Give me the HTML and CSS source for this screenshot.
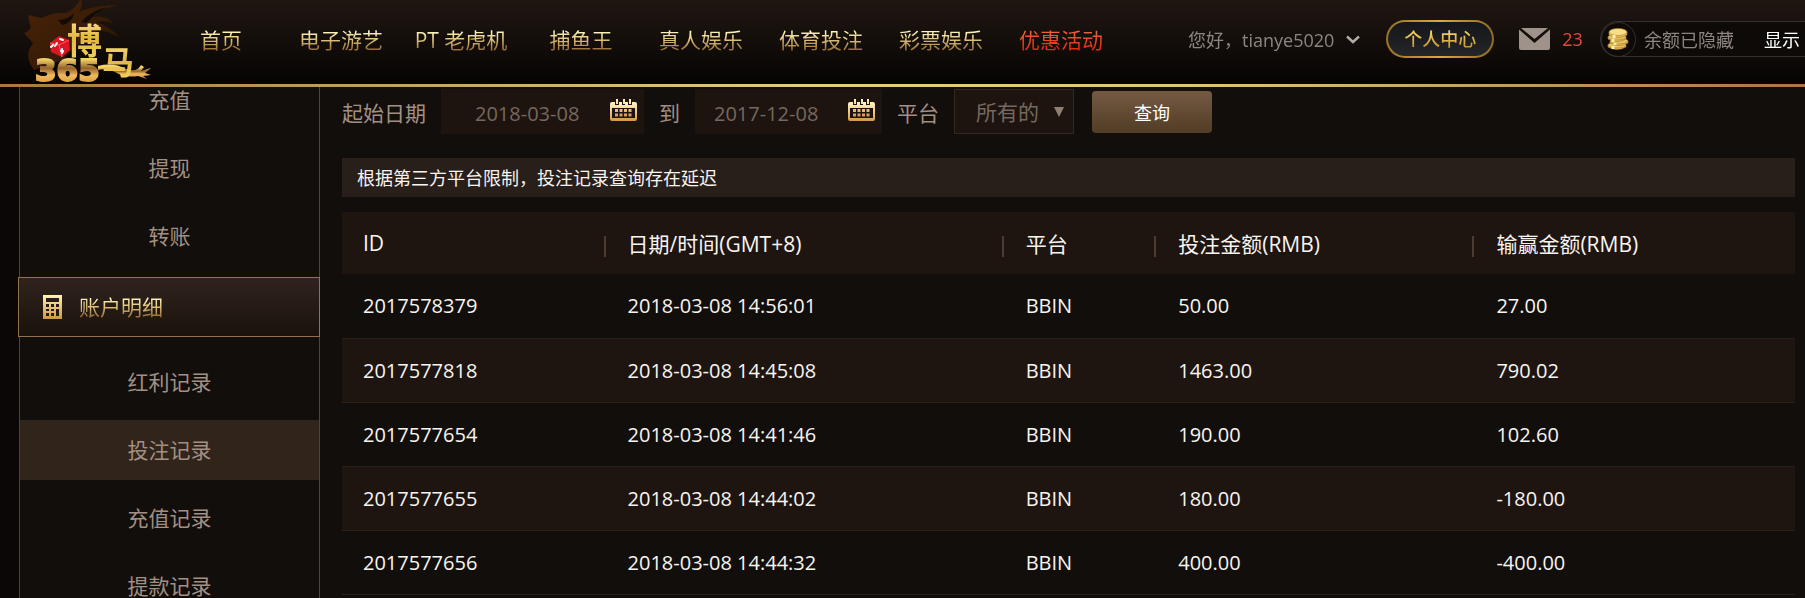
FILE: index.html
```html
<!DOCTYPE html>
<html lang="zh-CN">
<head>
<meta charset="utf-8">
<title>投注记录</title>
<link rel="stylesheet" href="styles.css">
</head>
<body>
<header class="topbar">
  <a class="logo" href="#" aria-label="博马365">
    <svg width="161" height="84" viewBox="0 0 161 84">
      <defs>
        <linearGradient id="gold" x1="0" y1="0" x2="0" y2="1">
          <stop offset="0" stop-color="#fff09a"/><stop offset=".5" stop-color="#e2b742"/><stop offset="1" stop-color="#f3d765"/>
        </linearGradient>
        <linearGradient id="bronze" x1="0" y1="0" x2="0" y2="1">
          <stop offset=".2" stop-color="#f3d36c"/><stop offset=".45" stop-color="#94632a"/><stop offset=".65" stop-color="#f0b95a"/><stop offset="1" stop-color="#c98a3c"/>
        </linearGradient>
        <linearGradient id="mane" x1="0" y1="0" x2="1" y2="1">
          <stop offset="0" stop-color="#4a2407"/><stop offset="1" stop-color="#2a1406"/>
        </linearGradient>
      </defs>
      <path fill="url(#mane)" d="M28 15 L42 18 Q54 12 66 13 Q76 8 79 1 L82 0 Q82 8 79 12 Q94 5 119 5 Q102 8 93 17 Q106 15 113 23 Q103 20 96 22 Q108 25 119 37 Q108 31 98 30 L76 46 L62 60 L34 70 Q26 60 29 50 L33 43 L24 33 Q33 30 30 24 Z"/>
      <path fill="#120b07" d="M81 22 Q92 10 108 7 Q94 13 87 23 Z M58 20 Q68 20 74 13 Q72 23 62 25 Z"/>
      <path fill="url(#bronze)" d="M98 66 Q113 62 126 69 Q137 73 141 65 L144 67 L141 71 L151 68 L145 73 L151 75 L143 76 L147 79 L138 76 Q125 78 115 72 Q107 68 98 70 Z"/>
      <text class="logo-main" x="67" y="54" fill="url(#gold)">博</text>
      <text class="logo-horse" x="102" y="74" fill="url(#gold)">马</text>
      <text class="logo-num" x="35" y="81" fill="url(#bronze)" stroke="url(#bronze)">365</text>
      <path fill="#dc1525" d="M50 43 L59 36 L69 40 L70 50 L62 57 L51 52 Z"/>
      <path stroke="#ff5a5a" stroke-width="1" fill="none" d="M50 43 L59 45 L69 40 M59 45 L62 57"/>
      <path stroke="#fff" stroke-width="2" stroke-linecap="round" d="M51 47 l2 -2 M55 46 l2 -3 M62 49 l-1 2 M62 53 l1 -2 M60 39 l3 1"/>
    </svg>
  </a>
  <nav class="mainnav">
    <a href="#"><span>首页</span></a>
    <a href="#"><span>电子游艺</span></a>
    <a href="#"><span>PT 老虎机</span></a>
    <a href="#"><span>捕鱼王</span></a>
    <a href="#"><span>真人娱乐</span></a>
    <a href="#"><span>体育投注</span></a>
    <a href="#"><span>彩票娱乐</span></a>
    <a href="#" class="promo"><span>优惠活动</span></a>
  </nav>
  <div class="account">
    <button class="user" type="button">您好，tianye5020
      <svg width="14" height="9" viewBox="0 0 14 9"><path d="M1 1.5 L7 7 L13 1.5" fill="none" stroke="#b5aca6" stroke-width="2.4"/></svg>
    </button>
    <a class="center-link" href="#"><span>个人中心</span></a>
    <a class="mail" href="#" aria-label="消息">
      <svg width="31" height="22" viewBox="0 0 31 22"><path fill="#9f928b" d="M2 0 H29 L15.500 11 Z M0 1.500 L15.500 15 L31 1.500 V20 Q31 22 29 22 H2 Q0 22 0 20 Z"/></svg>
      <span>23</span>
    </a>
    <div class="balance">
      <span class="coin">
        <svg width="24" height="24" viewBox="0 0 24 24">
          <g fill="#e9c25c" stroke="#a8782c" stroke-width=".6">
            <path d="M2 18 v2 q9 5 18 0 v-2z"/><ellipse cx="11" cy="18" rx="9" ry="3"/>
            <path d="M4 14 v2 q9 5 18 0 v-2z"/><ellipse cx="13" cy="14" rx="9" ry="3"/>
            <path d="M2 10 v2 q9 5 18 0 v-2z"/><ellipse cx="11" cy="10" rx="9" ry="3"/>
            <path d="M3 5 v3 q9 5 18 0 v-3z"/><ellipse cx="12" cy="5" rx="9" ry="3.500" fill="#f8df86"/>
          </g>
          <path stroke="#fff0ae" stroke-width="3" d="M8 8v3M7 12v3M9 16v2M7 19v3"/>
        </svg>
      </span>
      <span class="hidden-note">余额已隐藏</span>
      <button type="button" class="show">显示</button>
    </div>
  </div>
</header>

<div class="page">
  <aside class="sidebar">
    <a href="#">充值</a>
    <a href="#">提现</a>
    <a href="#">转账</a>
    <h2 class="group">
      <svg width="19" height="24" viewBox="0 0 19 24">
        <defs><linearGradient id="calc" x1="0" y1="0" x2="0" y2="1"><stop offset="0" stop-color="#fff3b8"/><stop offset="1" stop-color="#cf963f"/></linearGradient></defs>
        <path fill="url(#calc)" fill-rule="evenodd" d="M0 0H19V24H0Z M3 3V7H16V3Z M3 9V12H6V9Z M8 9V12H11V9Z M13 9V12H16V9Z M3 14V16H6V14Z M8 14V16H11V14Z M13 14V21H16V14Z M3 18V21H6V18Z M8 18V21H11V18Z"/>
      </svg>
      <span>账户明细</span>
    </h2>
    <a href="#">红利记录</a>
    <a href="#" class="active">投注记录</a>
    <a href="#">充值记录</a>
    <a href="#">提款记录</a>
  </aside>

  <main class="content">
    <form class="filters">
      <label for="from">起始日期</label>
      <div class="date date-from">
        <input id="from" type="text" value="2018-03-08">
        <button type="button" aria-label="选择起始日期">
          <svg width="27" height="23" viewBox="0 0 27 23">
            <defs><linearGradient id="cal" x1="0" y1="0" x2="0" y2="1"><stop offset="0" stop-color="#fff6c4"/><stop offset=".5" stop-color="#f0cd7c"/><stop offset="1" stop-color="#d8944a"/></linearGradient></defs>
            <path fill="url(#cal)" fill-rule="evenodd" d="M2 3H5V6H9V3H12V6H15V3H18V6H22V3H25Q27 3 27 5V20Q27 22 25 22H2Q0 22 0 20V5Q0 3 2 3Z M2 9V19H25V9Z"/>
            <path fill="url(#cal)" d="M6 0h2v5h-2zM13 0h2v5h-2zM19 0h2v5h-2zM5 10h3v3h-3zM9.500 10h3v3h-3zM14 10h3v3h-3zM18.500 10h3v3h-3zM5 14.500h3v3h-3zM9.500 14.500h3v3h-3zM14 14.500h3v3h-3zM18.500 14.500h3v3h-3z"/>
          </svg>
        </button>
      </div>
      <label for="to">到</label>
      <div class="date date-to">
        <input id="to" type="text" value="2017-12-08">
        <button type="button" aria-label="选择结束日期">
          <svg width="27" height="23" viewBox="0 0 27 23">
            <path fill="url(#cal)" fill-rule="evenodd" d="M2 3H5V6H9V3H12V6H15V3H18V6H22V3H25Q27 3 27 5V20Q27 22 25 22H2Q0 22 0 20V5Q0 3 2 3Z M2 9V19H25V9Z"/>
            <path fill="url(#cal)" d="M6 0h2v5h-2zM13 0h2v5h-2zM19 0h2v5h-2zM5 10h3v3h-3zM9.500 10h3v3h-3zM14 10h3v3h-3zM18.500 10h3v3h-3zM5 14.500h3v3h-3zM9.500 14.500h3v3h-3zM14 14.500h3v3h-3zM18.500 14.500h3v3h-3z"/>
          </svg>
        </button>
      </div>
      <label for="platform">平台</label>
      <div class="picker">
        <select id="platform"><option>所有的</option></select>
        <svg class="picker-arrow" width="10" height="10" viewBox="0 0 10 10"><path fill="#8f7f72" d="M0 0H10L5 10Z"/></svg>
      </div>
      <button type="submit" class="search">查询</button>
    </form>

    <p class="notice">根据第三方平台限制，投注记录查询存在延迟</p>

    <table class="records">
      <colgroup><col class="c-id"><col class="c-time"><col class="c-platform"><col class="c-bet"><col class="c-win"></colgroup>
      <thead>
        <tr><th>ID</th><th>日期/时间(GMT+8)</th><th>平台</th><th>投注金额(RMB)</th><th>输赢金额(RMB)</th></tr>
      </thead>
      <tbody>
        <tr><td>2017578379</td><td>2018-03-08 14:56:01</td><td>BBIN</td><td>50.00</td><td>27.00</td></tr>
        <tr><td>2017577818</td><td>2018-03-08 14:45:08</td><td>BBIN</td><td>1463.00</td><td>790.02</td></tr>
        <tr><td>2017577654</td><td>2018-03-08 14:41:46</td><td>BBIN</td><td>190.00</td><td>102.60</td></tr>
        <tr><td>2017577655</td><td>2018-03-08 14:44:02</td><td>BBIN</td><td>180.00</td><td>-180.00</td></tr>
        <tr><td>2017577656</td><td>2018-03-08 14:44:32</td><td>BBIN</td><td>400.00</td><td>-400.00</td></tr>
      </tbody>
    </table>
  </main>
</div>
</body>
</html>
```

FILE: styles.css
```css
* {
  box-sizing: border-box;
}

html {
  height: 100%;
  overflow: hidden;
}

body {
  margin: 0;
  height: 100%;
  overflow: hidden;
  background: #120e0b;
  color: #f8f4f0;
  font-family: "Open Sans", "Noto Sans CJK SC", sans-serif;
  font-size: 20px;
}

a {
  color: inherit;
  text-decoration: none;
}

button,
input,
select {
  margin: 0;
  padding: 0;
  border: 0;
  background: none;
  color: inherit;
  font: inherit;
}

svg {
  display: block;
}

/* top bar */
.topbar {
  position: sticky;
  top: 0;
  z-index: 2;
  display: flex;
  height: 87px;
  overflow: hidden;
  border-bottom: 3px solid;
  border-image: linear-gradient(90deg, #a87842, #e6cd7a 45%, #e2c872 65%, #a9744a) 1;
  background: linear-gradient(#1f1611, #120d0a 55%, #050303);
}

.logo {
  flex: none;
}

.logo-main {
  font: bold 35px "Noto Sans CJK SC", sans-serif;
}

.logo-horse {
  font: bold 32px "Noto Sans CJK SC", sans-serif;
}

.logo-num {
  font: bold 31px "DejaVu Sans", sans-serif;
  stroke-width: 2px;
}

.mainnav {
  display: flex;
  flex: none;
}

.mainnav a {
  display: flex;
  align-items: center;
  justify-content: center;
  width: 120px;
  padding-bottom: 4px;
  font-size: 21px;
  line-height: 28px;
}

.mainnav span,
.group span {
  background: linear-gradient(#fff6c0 20%, #dcc078 50%, #9a6f35 85%);
  background-clip: text;
  -webkit-background-clip: text;
  color: transparent;
}

.mainnav .promo span {
  background: linear-gradient(#f2603a 20%, #e22f0a 80%);
  background-clip: text;
  -webkit-background-clip: text;
}

.account {
  display: flex;
  flex: 1;
  align-items: center;
  min-width: 0;
  padding: 0 0 6px 67px;
  color: #8f8580;
  font-size: 18px;
  white-space: nowrap;
}

.user {
  display: flex;
  align-items: center;
  gap: 12px;
}

.center-link {
  flex: none;
  margin-left: 26px;
  padding: 0 16px;
  border: 2px solid transparent;
  border-radius: 19px;
  background: linear-gradient(#15161a, #24262a) padding-box, linear-gradient(90deg, #9a7226, #d9a93a 50%, #8e6b22) border-box;
  line-height: 34px;
}

.center-link span {
  background: linear-gradient(#f5d565 20%, #c9982f 80%);
  background-clip: text;
  -webkit-background-clip: text;
  color: transparent;
  font-weight: 500;
}

.mail {
  display: flex;
  flex: none;
  align-items: center;
  gap: 12px;
  margin-left: 25px;
  color: #e04a37;
}

.balance {
  display: flex;
  flex: 1;
  align-items: center;
  height: 36px;
  margin-left: 17px;
  border: 1px solid #35302d;
  border-right: 0;
  border-radius: 18px 0 0 18px;
  background: #0d0a08;
}

.coin {
  display: flex;
  flex: none;
  align-items: center;
  justify-content: center;
  width: 35px;
  height: 35px;
  margin-right: 8px;
  border: 1px solid #35302d;
  border-radius: 50%;
}

.hidden-note {
  margin-right: 30px;
}

.show {
  color: #fff;
}

/* page body, scrolled under the bar */
.page {
  display: flex;
  gap: 22px;
  margin-top: -17px;
  padding: 0 10px 0 19px;
  background: linear-gradient(90deg, #0a0706 19px, #120e0b 19px);
}

/* sidebar */
.sidebar {
  display: flex;
  flex: none;
  flex-direction: column;
  gap: 8px;
  width: 301px;
  border: solid #5b422f;
  border-width: 0 1px;
  background: #120e0b;
  color: #a39084;
  font-size: 21px;
  line-height: 60px;
  text-align: center;
}

.sidebar .active {
  background: #31241a;
}

.group {
  display: flex;
  align-items: center;
  gap: 17px;
  height: 60px;
  margin: 3px -1px 7px -2px;
  padding-left: 24px;
  border: 1px solid #92714c;
  background: linear-gradient(#30231d, #1a120c);
  font-size: 21px;
  font-weight: 400;
  line-height: 28px;
}

/* content */
.content {
  flex: 1;
  min-width: 0;
  padding-top: 19px;
}

.filters {
  display: flex;
  align-items: center;
  height: 45px;
  color: #a39084;
  font-size: 21px;
}

.date {
  display: flex;
  align-items: center;
  height: 45px;
  margin: 0 15px;
  padding-right: 7px;
  background: #1d140f;
}

.date-from {
  width: 203px;
  padding-left: 34px;
}

.date-to {
  width: 187px;
  padding-left: 19px;
}

.date input {
  flex: 1;
  min-width: 0;
  padding-top: 4px;
  color: #75685e;
  font-size: 20px;
}

.date button {
  padding-bottom: 2px;
}

.picker {
  display: flex;
  position: relative;
  margin: 0 18px 0 15px;
}

.picker select {
  width: 120px;
  height: 45px;
  padding: 0 30px 0 21px;
  border: 1px solid #33281f;
  background: #1d140f;
  color: #75685e;
  appearance: none;
}

.picker-arrow {
  position: absolute;
  top: 18px;
  right: 10px;
  pointer-events: none;
}

.search {
  width: 120px;
  height: 42px;
  border-radius: 4px;
  background: linear-gradient(#755a42, #513c25);
  color: #fff;
  font-size: 18px;
}

.notice {
  margin: 24px 0 15px;
  padding: 2px 15px 0;
  background: #281e1a;
  font-size: 18px;
  line-height: 37px;
}

.records {
  width: 100%;
  border-collapse: collapse;
  table-layout: fixed;
}

.c-id { width: 18%; }
.c-time { width: 27.4%; }
.c-platform { width: 10.5%; }
.c-bet { width: 21.9%; }
.c-win { width: 22.2%; }

.records th,
.records td {
  padding: 0 0 0 24px;
  text-align: left;
}

.records th:first-child,
.records td:first-child {
  padding-left: 21px;
}

.records th {
  height: 62px;
  background: linear-gradient(90deg, #4b3b30, #4b3b30) left 0 top 24px / 2px 21px no-repeat;
  font-size: 21px;
  font-weight: 400;
}

.records th:first-child {
  background: none;
}

.records thead tr,
.records tbody tr:nth-child(even) {
  background: #1e1510;
}

.records td {
  height: 64px;
  border-bottom: 1px solid #2b2019;
}
```
